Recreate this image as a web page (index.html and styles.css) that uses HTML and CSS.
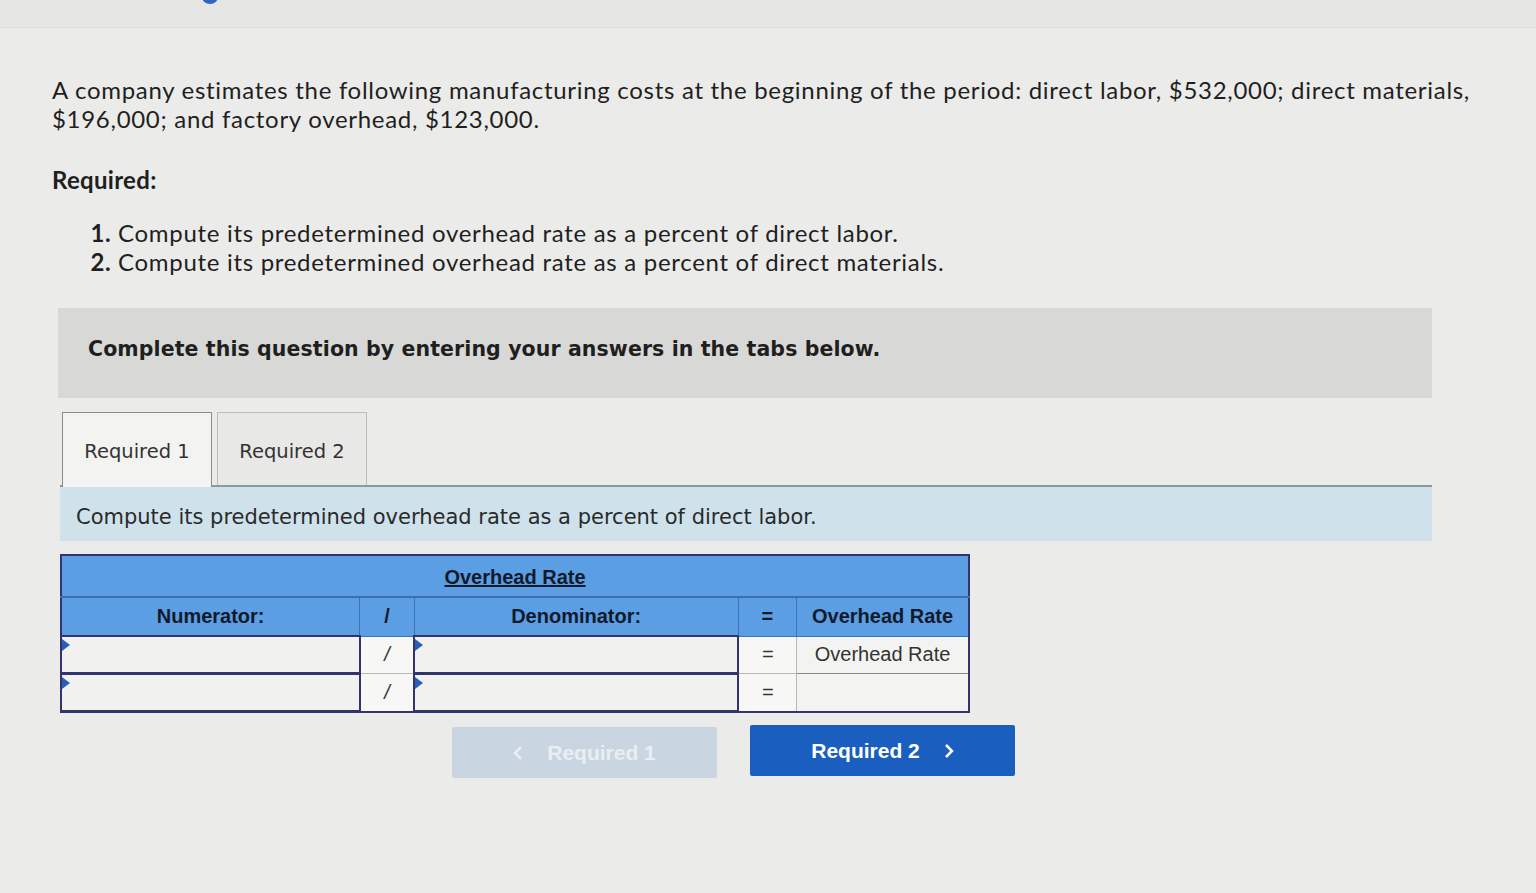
FILE: index.html
```html
<!DOCTYPE html>
<html lang="en">
<head>
    <meta charset="UTF-8">
    <meta name="viewport" content="width=device-width, initial-scale=1.0">
    <title>Overhead Rate - Question</title>
    <link rel="stylesheet" href="styles.css">
</head>
<body>

<div class="topbar">
    <span class="dot"></span>
</div>

<div class="page">
    <p class="intro">A company estimates the following manufacturing costs at the beginning of the period: direct labor, $532,000; direct materials, $196,000; and factory overhead, $123,000.</p>

    <p class="req-title">Required:</p>

    <ol class="req-list">
        <li>Compute its predetermined overhead rate as a percent of direct labor.</li>
        <li>Compute its predetermined overhead rate as a percent of direct materials.</li>
    </ol>

    <div class="notice">
        Complete this question by entering your answers in the tabs below.
    </div>

    <div class="tabs">
        <div class="tab active">Required 1</div>
        <div class="tab">Required 2</div>
    </div>

    <div class="tab-desc">Compute its predetermined overhead rate as a percent of direct labor.</div>

    <table class="rate-table">
        <tr class="head-top">
            <th colspan="5"><span class="ul">Overhead Rate</span></th>
        </tr>
        <tr class="head">
            <th class="c-num">Numerator:</th>
            <th class="c-op">/</th>
            <th class="c-den">Denominator:</th>
            <th class="c-op2">=</th>
            <th class="c-res">Overhead Rate</th>
        </tr>
        <tr>
            <td class="inp"><span class="tri"></span></td>
            <td class="op">/</td>
            <td class="inp"><span class="tri"></span></td>
            <td class="op">=</td>
            <td class="res">Overhead Rate</td>
        </tr>
        <tr>
            <td class="inp"><span class="tri"></span></td>
            <td class="op">/</td>
            <td class="inp"><span class="tri"></span></td>
            <td class="op">=</td>
            <td class="res"></td>
        </tr>
    </table>

    <div class="nav">
        <button class="nav-btn disabled">
            <svg class="chev" width="10" height="16" viewBox="0 0 10 16"><path d="M8 2 L2 8 L8 14" fill="none" stroke="currentColor" stroke-width="2.5"/></svg>
            Required 1
        </button>
        <button class="nav-btn primary">
            Required 2
            <svg class="chev" width="10" height="16" viewBox="0 0 10 16"><path d="M2 2 L8 8 L2 14" fill="none" stroke="currentColor" stroke-width="2.5"/></svg>
        </button>
    </div>
</div>

</body>
</html>
```

FILE: styles.css
```css
body {
    margin: 0;
    background-color: #ebebe9;
    color: #1f1f1f;
    font-family: Lato, "Open Sans", sans-serif;
}
.topbar {
    height: 27px;
    border-bottom: 1px solid #dcdcda;
    background-color: #e6e6e4;
    position: relative;
}
.dot {
    position: absolute;
    left: 202px;
    top: -10px;
    width: 16px;
    height: 14px;
    border-radius: 50%;
    background-color: #2f66c4;
}
.page {
    padding-left: 52px;
    width: 1440px;
}
.intro {
    margin: 47px 0 0 0;
    max-width: 1435px;
    font-size: 24px;
    line-height: 29px;
    letter-spacing: 0.7px;
}
.req-title {
    margin: 32px 0 0 0;
    font-size: 24px;
    line-height: 29px;
    font-weight: bold;
    letter-spacing: 0.3px;
}
.req-list {
    margin: 24px 0 0 0;
    padding-left: 66px;
    font-size: 24px;
    line-height: 29px;
    letter-spacing: 0.7px;
}
.req-list li::marker {
    font-weight: bold;
}
.notice {
    margin: 32px 0 0 6px;
    width: 1344px;
    height: 62px;
    padding: 28px 0 0 30px;
    background-color: #d8d8d6;
    font-family: "DejaVu Sans", sans-serif;
    font-weight: bold;
    font-size: 20.5px;
    line-height: 26px;
    letter-spacing: 0.1px;
}
.tabs {
    display: flex;
    gap: 5px;
    margin: 14px 0 0 10px;
}
.tab {
    width: 148px;
    height: 72px;
    line-height: 78px;
    text-align: center;
    font-family: "DejaVu Sans", sans-serif;
    font-size: 19.5px;
    color: #333;
    background-color: #e8e8e6;
    border: 1px solid #bdbdbb;
    border-bottom: none;
}
.tab.active {
    background-color: #f3f3f1;
    border-color: #8c8c8a;
    height: 74px;
    margin-bottom: -2px;
}
.tab-desc {
    margin-left: 8px;
    width: 1356px;
    height: 54px;
    line-height: 60px;
    padding-left: 16px;
    background-color: #cfe2eb;
    border-top: 2px solid #8a9aa2;
    font-family: "DejaVu Sans", sans-serif;
    font-size: 21px;
    color: #2a2a2a;
}
.rate-table {
    margin: 13px 0 0 8px;
    border-collapse: collapse;
    width: 910px;
    font-family: "Liberation Sans", Arial, sans-serif;
    font-size: 20px;
    border: 2px solid #33336e;
}
.rate-table th {
    background-color: #5b9ee4;
    color: #111a2a;
    font-weight: bold;
    border: 1px solid #3a74b8;
    padding: 0;
}
.head-top th {
    height: 38px;
    padding-top: 2px;
    border-bottom: 2px solid #3d6fb0;
}
.ul {
    text-decoration: underline;
}
.head th {
    height: 37px;
}
.c-num { width: 300px; }
.c-op { width: 54px; font-weight: normal; }
.c-den { width: 326px; }
.c-op2 { width: 58px; font-weight: normal; }
.c-res { width: 172px; }
.rate-table td {
    height: 35px;
    padding: 0;
    text-align: center;
}
.inp {
    position: relative;
    background-color: #f1f1ef;
    border: 2px solid #33336e;
    border-bottom-width: 3px;
}
.tri {
    position: absolute;
    left: 0;
    top: 2px;
    width: 0;
    height: 0;
    border-top: 6px solid transparent;
    border-bottom: 6px solid transparent;
    border-left: 8px solid #2b5fb6;
}
.op {
    background-color: #f7f7f5;
    border: 1px solid #b8b8b6;
    color: #333;
    font-style: italic;
}
.res {
    background-color: #f3f3f1;
    border: 1px solid #8a8a88;
    color: #333;
}
.nav {
    display: flex;
    gap: 33px;
    margin: 12px 0 0 400px;
}
.nav-btn {
    width: 265px;
    height: 51px;
    border: none;
    border-radius: 2px;
    font-family: "Liberation Sans", Arial, sans-serif;
    font-weight: bold;
    font-size: 21px;
    color: #fff;
    display: flex;
    align-items: center;
    justify-content: center;
    gap: 24px;
}
.nav-btn.disabled {
    background-color: #c9d6e1;
    color: #e9eef2;
    margin-top: 2px;
}
.nav-btn.primary {
    background-color: #1a5fbf;
}
```
